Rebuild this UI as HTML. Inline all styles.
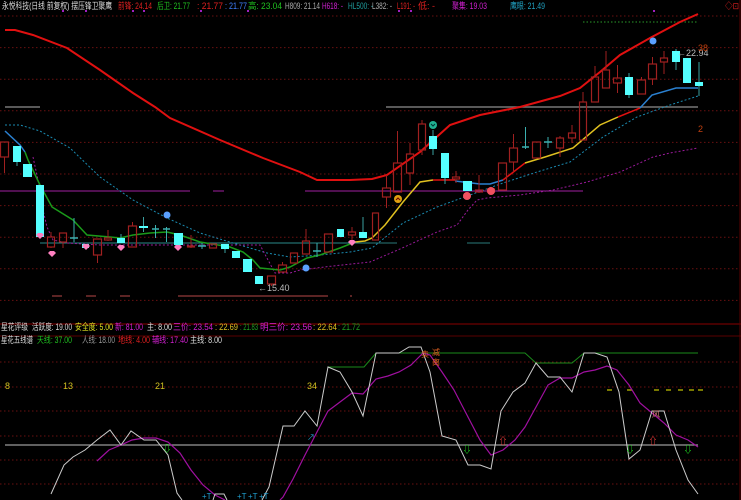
<!DOCTYPE html>
<html><head><meta charset="utf-8">
<style>
html,body{margin:0;padding:0;background:#000;width:741px;height:500px;overflow:hidden}
svg{display:block}
text{font-family:"Liberation Sans","Noto Sans CJK SC",sans-serif;font-size:9px}
</style></head><body>
<svg id="s" width="741" height="500" viewBox="0 0 741 500" xmlns="http://www.w3.org/2000/svg">
<rect width="741" height="500" fill="#000"/>
<g id="grid" stroke="#6a1010" stroke-dasharray="1.5,2.5" stroke-width="1"></g>
<line x1="0" y1="324" x2="741" y2="324" stroke="#5a0000" stroke-width="1.5"/>
<line x1="0" y1="336" x2="741" y2="336" stroke="#5a0000" stroke-width="1"/>
<line x1="740" y1="0" x2="740" y2="500" stroke="#5a0000" stroke-width="1"/>
<line x1="5" y1="107" x2="40" y2="107" stroke="#777" stroke-width="1.5"/>
<line x1="386" y1="107" x2="698" y2="107" stroke="#777" stroke-width="1.5"/>
<g stroke="#a020a0" stroke-width="1"><line x1="0" y1="191" x2="190" y2="191"/><line x1="213" y1="191" x2="224" y2="191"/><line x1="305" y1="191" x2="583" y2="191"/></g>
<line x1="40" y1="243" x2="370" y2="243" stroke="#2a8a8a" stroke-width="1"/>
<g stroke="#2a7a7a" stroke-width="1"><line x1="370" y1="243" x2="397" y2="243"/><line x1="467" y1="243" x2="490" y2="243"/></g>
<g stroke="#7a3030" stroke-width="1.5"><line x1="52" y1="296" x2="62" y2="296"/><line x1="86" y1="296" x2="96" y2="296"/><line x1="120" y1="296" x2="130" y2="296"/><line x1="178" y1="296" x2="328" y2="296"/><line x1="350" y1="296" x2="352" y2="296"/></g>
<line x1="583" y1="22" x2="698" y2="22" stroke="#2a9a2a" stroke-dasharray="1.5,2" stroke-width="1"/>
<polyline fill="none" stroke="#e01010" stroke-width="2" points="5,30 15,30 33,35 67,48 100,70 133,93 155,107 170,118 220,140 263,158 300,172 317,180 350,180 372,179 387,175 420,152 450,125 480,115 520,107 560,96 580,88 600,72 620,55 650,38 680,22 698,14"/>
<polyline fill="none" stroke="#1a8ab0" stroke-width="1" stroke-dasharray="2,2" points="5,125 20,125 40,131 70,148 100,177 133,200 167,218 200,233 233,243 267,253 290,257 320,255 350,252 372,248 403,223 437,207 470,195 503,183 537,172 570,162 603,137 637,117 670,105 698,96"/>
<polyline fill="none" stroke="#9a1a9a" stroke-width="1" stroke-dasharray="2,2" points="33,157 38,180 43,210 47,227 53,240 67,243 100,245 260,245 275,273 290,273 300,270 333,266 370,262 400,249 437,232 457,225 468,210 477,200 487,198 520,195 553,190 587,182 620,172 653,157 670,153 698,148"/>
<polyline fill="none" stroke="#2a80d0" stroke-width="1.5" points="5,131 20,145 25,152"/>
<polyline fill="none" stroke="#1a9a1a" stroke-width="1.5" points="25,152 28,160 40,185 52,207 73,220 87,235 110,237 120,238 133,235 150,233 167,232 180,235 200,242 230,247 243,252 253,260 260,268 280,270 290,267 307,258 320,255 340,248 355,242"/>
<polyline fill="none" stroke="#e0c020" stroke-width="1.5" points="355,242 365,241 372,238 385,225 403,202 420,182 433,180"/>
<polyline fill="none" stroke="#e01010" stroke-width="1.5" points="433,180 455,180"/>
<polyline fill="none" stroke="#2a80d0" stroke-width="1.5" points="455,181 480,184 490,184 503,180"/>
<polyline fill="none" stroke="#e01010" stroke-width="1.5" points="503,180 525,163"/>
<polyline fill="none" stroke="#e0c020" stroke-width="1.5" points="525,163 545,157 573,148 600,125 618,117"/>
<polyline fill="none" stroke="#e01010" stroke-width="1.5" points="618,117 640,108"/>
<polyline fill="none" stroke="#2a80d0" stroke-width="1.5" points="640,108 652,95 676,88 698,88"/>
<g id="candles"></g>
<g>
<circle cx="167" cy="215" r="3.5" fill="#5aa0ff"/><circle cx="306" cy="268" r="3.5" fill="#5aa0ff"/><circle cx="653" cy="41" r="3.5" fill="#5aa0ff"/>
<circle cx="433" cy="125" r="4" fill="#20b090"/><path d="M431 124l2 2 2-2" stroke="#033" fill="none"/>
<circle cx="398" cy="199" r="4" fill="#e0a010"/><path d="M396 200l2-2 2 2" stroke="#600" fill="none"/>
<circle cx="467" cy="196" r="4" fill="#f05060"/><circle cx="491" cy="191" r="4" fill="#f05060"/>
</g>
<g fill="#ff80c0" id="gems"></g>
<text x="258" y="291" fill="#bbb">←15.40</text>
<text x="677" y="56" fill="#bbb">←22.94</text>
<text x="698" y="51" fill="#c04010">38</text>
<text x="698" y="132" fill="#c04010">2</text>
<g id="labels" lengthAdjust="spacingAndGlyphs"></g>
<g fill="#a020c0"><rect x="62" y="10" width="2" height="2"/><rect x="85" y="10" width="2" height="2"/><rect x="132" y="10" width="2" height="2"/><rect x="143" y="10" width="2" height="2"/><rect x="200" y="10" width="2" height="2"/><rect x="247" y="10" width="2" height="2"/><rect x="398" y="10" width="2" height="2"/><rect x="410" y="10" width="2" height="2"/><rect x="653" y="10" width="2" height="2"/></g>
<text x="725" y="9" fill="#e02020" textLength="14" lengthAdjust="spacingAndGlyphs">◇⊡</text>
<g id="grid2" stroke="#6a1010" stroke-dasharray="1.5,2.5" stroke-width="1"></g>
<line x1="5" y1="445" x2="698" y2="445" stroke="#999" stroke-width="1.2"/>
<g fill="#d0c020"><text x="5" y="389">8</text><text x="63" y="389">13</text><text x="155" y="389">21</text><text x="307" y="389">34</text></g>
<g stroke="#a0a000" stroke-width="1.5"><line x1="607" y1="390" x2="612" y2="390"/><line x1="627" y1="390" x2="632" y2="390"/><line x1="654" y1="390" x2="659" y2="390"/><line x1="666" y1="390" x2="671" y2="390"/><line x1="678" y1="390" x2="683" y2="390"/><line x1="689" y1="390" x2="694" y2="390"/><line x1="698" y1="390" x2="703" y2="390"/></g>
<polyline fill="none" stroke="#1a8a1a" stroke-width="1" points="328,367 364,367 376,353 525,353 536,363 572,363 584,353 698,353"/>
<polyline fill="none" stroke="#a010a0" stroke-width="1.2" points="97,461 109,450 121,445 132,440 144,438 156,438 168,442 180,453 191,470 203,485 215,495 225,500"/>
<polyline fill="none" stroke="#a010a0" stroke-width="1.2" points="280,500 283,497 293,479 305,455 317,432 328,411 340,402 352,393 363,394 376,379 388,376 399,372 411,365 423,353 430,355 442,372 454,390 468,417 480,440 491,455 503,450 515,440 525,427 536,407 548,385 560,378 572,378 584,372 595,370 607,366 617,370 629,385 640,403 652,413 664,423 676,435 688,440 698,447"/>
<polyline fill="none" stroke="#ccc" stroke-width="1" points="51,494 64,465 73,457 85,450 97,440 110,430 121,445 131,431 144,440 156,440 168,455 177,493 182,500"/>
<polyline fill="none" stroke="#ccc" stroke-width="1" points="213,500 215,494 224,494 227,500"/>
<polyline fill="none" stroke="#ccc" stroke-width="1" points="262,500 269,487 283,426 294,426 305,411 317,426 328,367 340,372 352,392 363,416 376,353 399,353 409,347 421,347 430,372 442,436 456,440 468,465 480,465 491,469 501,411 513,392 525,383 536,363 548,377 560,377 572,392 584,353 595,353 607,357 619,392 629,459 640,450 652,411 664,411 676,450 688,480 698,494"/>
<g font-weight="bold"><text x="167" y="452" fill="#20e020" text-anchor="middle">⇩</text><text x="467" y="453" fill="#20e020" text-anchor="middle">⇩</text><text x="630" y="453" fill="#20e020" text-anchor="middle">⇩</text><text x="688" y="453" fill="#20e020" text-anchor="middle">⇩</text><text x="503" y="444" fill="#ff4040" text-anchor="middle">⇧</text><text x="653" y="444" fill="#ff4040" text-anchor="middle">⇧</text></g>
<g fill="#e06020"><text x="421" y="357" style="font-size:8px">卖</text><text x="432" y="355" style="font-size:8px">减</text><text x="432" y="365" style="font-size:8px">离</text><text x="652" y="417" style="font-size:8px" fill="#e08080">风</text></g>
<g fill="#20a0d0"><text x="202" y="499" style="font-size:8px">+T</text><text x="237" y="499" style="font-size:8px">+T</text><text x="248" y="499" style="font-size:8px">+T</text><text x="259" y="499" style="font-size:8px">+T</text><text x="307" y="440" style="font-size:8px">↗</text></g>
</svg>
<script>
var ns="http://www.w3.org/2000/svg";
function el(p,t,a){var e=document.createElementNS(ns,t);for(var k in a)e.setAttribute(k,a[k]);p.appendChild(e);return e;}
var g=document.getElementById('grid');
[16,47.6,79.2,110.8,142.4,174,205.6,237.2,268.8,300.4].forEach(function(y){el(g,'line',{x1:0,x2:740,y1:y,y2:y});});
var g2=document.getElementById('grid2');
[362,387,411,436,460,484].forEach(function(y){el(g2,'line',{x1:0,x2:740,y1:y,y2:y});});
var L=[
[9,2,110,'#ddd','永悦科技(日线 前复权) 摆压锋卫聚鹰'],[9,118,34,'#e02020','前锋: 24.14'],[9,157,33,'#20c020','后卫: 21.77'],
[9,197,26,'#e02020',': 21.77'],[9,225,22,'#4080ff',': 21.77'],[9,248,34,'#20c020','高: 23.04'],[9,285,35,'#aaa','H809: 21.14'],
[9,322,21,'#d020d0','H618: -'],[9,348,25,'#20a0a0','HL500: -'],[9,372,20,'#aaa','L382: -'],[9,397,18,'#e02020','L191: -'],
[9,418,17,'#e02020','低: -'],[9,452,35,'#d020d0','聚集: 19.03'],[9,510,35,'#20a0c0','鹰眼: 21.49'],
[330,1,27,'#ddd','星花评级'],[330,32,40,'#ddd','活跃度: 19.00'],[330,75,38,'#e0e020','安全度: 5.00'],[330,115,28,'#d020d0','新: 81.00'],
[330,147,25,'#ddd','主: 8.00'],[330,173,40,'#d020d0','三价: 23.54'],[330,215,23,'#e0c020',': 22.69'],[330,240,18,'#20a020',': 21.83'],
[330,260,52,'#d020d0','明三价: 23.56'],[330,313,24,'#e0c020',': 22.64'],[330,338,22,'#20a020',': 21.72'],
[343,1,32,'#ddd','星花五线谱'],[343,37,35,'#20c020','天线: 37.00'],[343,82,33,'#999','人线: 18.00'],[343,118,32,'#e02020','地线: 4.00'],
[343,152,36,'#d020d0','辅线: 17.40'],[343,190,32,'#ddd','主线: 8.00']];
var lg=document.getElementById('labels');
L.forEach(function(t){var e=el(lg,'text',{x:t[1],y:t[0],fill:t[3],textLength:t[2],lengthAdjust:'spacingAndGlyphs'});e.textContent=t[4];});
var C=[
[0,9,142,157,142,173,'r'],[13,21,146,162,146,166,'c'],[23,32,164,177,164,177,'c'],[36,44,185,237,185,237,'c'],
[47,55,237,247,232,248,'r'],[59,67,233,242,233,248,'r'],[70,78,238,238,218,242,'x'],[82,89,244,248,244,248,'c'],
[93,102,239,255,239,263,'r'],[104,112,238,240,230,241,'r'],[117,125,238,243,234,243,'c'],[128,137,226,247,222,247,'r'],
[139,148,226,228,217,232,'c'],[152,159,229,229,225,238,'x'],[163,170,229,229,227,242,'x'],[174,183,233,245,233,245,'c'],
[187,195,246,247,235,248,'r'],[198,206,246,246,243,249,'x'],[209,217,244,248,244,248,'r'],[221,229,244,249,244,253,'c'],
[232,240,251,258,251,258,'c'],[243,252,259,272,259,272,'c'],[255,263,276,284,276,284,'c'],[267,276,276,284,276,286,'r'],
[278,287,265,272,262,272,'r'],[290,298,253,263,253,263,'r'],[302,310,241,254,229,254,'r'],[313,321,251,251,243,257,'x'],
[324,333,234,252,234,252,'r'],[337,344,229,237,229,237,'c'],[348,356,232,235,227,240,'r'],[359,367,232,238,217,238,'c'],
[372,379,213,240,213,240,'r'],[382,391,188,197,175,208,'r'],[393,402,163,192,131,192,'r'],[406,414,154,173,143,185,'r'],
[418,426,124,150,120,155,'r'],[429,437,136,149,130,155,'c'],[441,449,153,178,153,184,'c'],[452,460,177,179,171,183,'r'],
[463,472,181,191,181,191,'c'],[475,483,190,192,175,193,'r'],[487,495,189,192,189,193,'r'],[498,507,163,190,163,190,'r'],
[509,518,148,162,134,172,'r'],[522,529,147,147,127,149,'x'],[532,541,142,158,142,158,'r'],[544,552,142,142,137,148,'x'],
[556,564,138,148,136,157,'r'],[568,576,133,138,125,143,'r'],[579,587,102,140,92,140,'r'],[591,599,77,102,66,102,'r'],
[602,610,70,88,51,88,'r'],[613,622,78,83,65,93,'r'],[625,633,77,95,73,98,'c'],[637,646,80,94,77,94,'r'],
[648,657,64,79,57,85,'r'],[660,668,58,62,51,74,'r'],[672,680,51,62,49,70,'c'],[683,691,58,83,58,83,'c'],[695,703,82,86,62,96,'c']];
var cg=document.getElementById('candles');
C.forEach(function(c){var x0=c[0],x1=c[1],m=(x0+x1)/2;
 if(c[6]=='r'){el(cg,'line',{x1:m,x2:m,y1:c[4],y2:c[2],stroke:'#a02020'});el(cg,'line',{x1:m,x2:m,y1:c[3],y2:c[5],stroke:'#a02020'});
  el(cg,'rect',{x:x0+0.5,y:c[2],width:x1-x0-1,height:Math.max(1,c[3]-c[2]),fill:'none',stroke:'#a02020','stroke-width':1.2});}
 else if(c[6]=='c'){el(cg,'line',{x1:m,x2:m,y1:c[4],y2:c[5],stroke:'#3aa0a0'});el(cg,'rect',{x:x0,y:c[2],width:x1-x0,height:Math.max(2,c[3]-c[2]),fill:'#55ffff'});}
 else {el(cg,'line',{x1:m,x2:m,y1:c[4],y2:c[5],stroke:'#3ab0b0'});el(cg,'line',{x1:x0,x2:x1,y1:c[2],y2:c[2],stroke:'#3ab0b0','stroke-width':1.5});}
});
var gg=document.getElementById('gems');
[[40,237],[52,255],[86,248],[121,249],[178,249],[352,244]].forEach(function(p){el(gg,'path',{d:'M'+(p[0]-4)+' '+(p[1]-2)+'l2-2h4l2 2-4 4z'});});
</script>
</body></html>
